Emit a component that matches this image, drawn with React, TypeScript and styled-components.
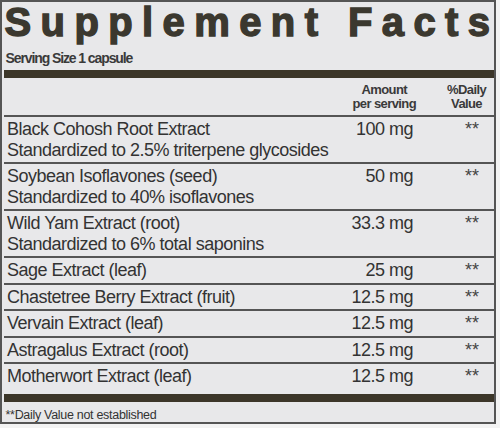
import React from "react";
import styled, { createGlobalStyle } from "styled-components";

const Global = createGlobalStyle`
  html, body { margin: 0; padding: 0; background: #f3f3f3; }
  body { font-family: "Liberation Sans", Arial, sans-serif; }
`;

const Label = styled.div`
  box-sizing: border-box;
  width: 496px;
  height: 424px;
  border: 2px solid #555;
  padding-left: 2px;
  background: #e8e8ea;
  color: #333;
  display: flex;
  flex-direction: column;
`;

const Title = styled.h1`
  margin: 0;
  padding-left: 0.5px;
  font-size: 40px;
  line-height: 40px;
  font-weight: 700;
  letter-spacing: 9.4px;
  white-space: nowrap;
  color: #3b382f;
  -webkit-text-stroke: 1.4px #3b382f;
`;

const Serving = styled.div`
  margin-top: 9px;
  padding-left: 1.5px;
  font-size: 14px;
  line-height: 14px;
  font-weight: 700;
  letter-spacing: -1.1px;
  color: #3a3a3a;
`;

const Bar = styled.div<{ $gap: number }>`
  margin-top: ${(p) => p.$gap}px;
  height: ${(p) => (p.$gap > 4 ? 8 : 7)}px;
  background: #3c3629;
`;

const Grid = styled.div`
  display: grid;
  grid-template-columns: 1fr 90px 81px;
  align-items: start;
`;

const Header = styled(Grid)`
  padding: 5px 0 4px;
  font-size: 13px;
  line-height: 14px;
  font-weight: 700;
  letter-spacing: -0.6px;
  color: #3a3a3a;
`;

const HeadAmount = styled.div`
  grid-column: 2;
  justify-self: end;
  margin-right: -3px;
  text-align: center;
  white-space: nowrap;
`;

const HeadDV = styled.div`
  grid-column: 3;
  justify-self: start;
  margin-left: 34px;
  text-align: center;
`;

const Row = styled(Grid)`
  border-top: 2px solid #555;
  padding: 2px 0;
  font-size: 18px;
  line-height: 20.5px;
  letter-spacing: -0.5px;
  color: #333;
`;

const Name = styled.div`
  padding-left: 3px;
  white-space: nowrap;
  min-width: 0;
`;

const Amount = styled.div`
  text-align: right;
  white-space: nowrap;
`;

const DV = styled.div`
  padding-left: 52px;
  letter-spacing: 0;
  color: #444;
`;

const Foot = styled.div`
  padding: 6px 0 0 1.5px;
  font-size: 12.5px;
  line-height: 14px;
  letter-spacing: -0.3px;
  color: #333;
`;

type Item = { name: string; sub?: string; amount: string };

const items: Item[] = [
  { name: "Black Cohosh Root Extract", sub: "Standardized to 2.5% triterpene glycosides", amount: "100 mg" },
  { name: "Soybean Isoflavones (seed)", sub: "Standardized to 40% isoflavones", amount: "50 mg" },
  { name: "Wild Yam Extract (root)", sub: "Standardized to 6% total saponins", amount: "33.3 mg" },
  { name: "Sage Extract (leaf)", amount: "25 mg" },
  { name: "Chastetree Berry Extract (fruit)", amount: "12.5 mg" },
  { name: "Vervain Extract (leaf)", amount: "12.5 mg" },
  { name: "Astragalus Extract (root)", amount: "12.5 mg" },
  { name: "Motherwort Extract (leaf)", amount: "12.5 mg" },
];

export default function App() {
  return (
    <>
      <Global />
      <Label>
        <Title>Supplement Facts</Title>
        <Serving>Serving Size 1 capsule</Serving>
        <Bar $gap={5} />
        <Header>
          <HeadAmount>
            Amount
            <br />
            per serving
          </HeadAmount>
          <HeadDV>
            %Daily
            <br />
            Value
          </HeadDV>
        </Header>
        {items.map((it) => (
          <Row key={it.name}>
            <Name>
              {it.name}
              {it.sub && (
                <>
                  <br />
                  {it.sub}
                </>
              )}
            </Name>
            <Amount>{it.amount}</Amount>
            <DV>**</DV>
          </Row>
        ))}
        <Bar $gap={5.5} />
        <Foot>**Daily Value not established</Foot>
      </Label>
    </>
  );
}
